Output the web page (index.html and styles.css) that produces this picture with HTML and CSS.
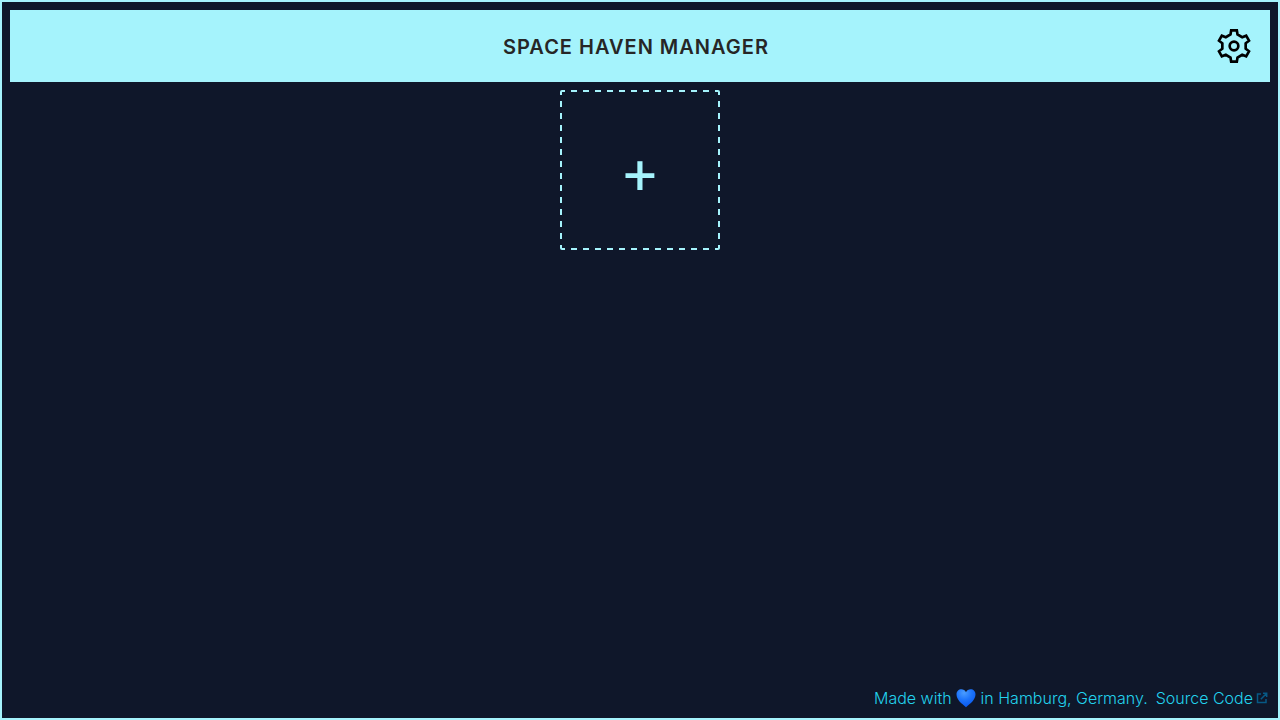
FILE: index.html
```html
<!DOCTYPE html>
<html lang="en">
<head>
<meta charset="utf-8">
<title>Space Haven Manager</title>
<link rel="stylesheet" href="styles.css">
</head>
<body>
<div class="app">
  <header class="header">
    <h1 class="title">Space Haven Manager</h1>
    <button class="settings" type="button" aria-label="Settings">
      <svg class="settings-icon" viewBox="-12 -12 24 24" fill="none" stroke="currentColor" stroke-width="1.6">
        <path d="M-1.7-9.4H1.7L2.1-6.9L4.9-5.3L7.3-6.2L9-3.2L7-1.6V1.6L9 3.2L7.3 6.2L4.9 5.3L2.1 6.9L1.7 9.4H-1.7L-2.1 6.9L-4.9 5.3L-7.3 6.2L-9 3.2L-7 1.6V-1.6L-9-3.2L-7.3-6.2L-4.9-5.3L-2.1-6.9Z"/>
        <circle r="2.6"/>
      </svg>
    </button>
  </header>
  <main class="content">
    <button class="add" type="button" aria-label="Add game">+</button>
  </main>
  <footer class="footer">
    <span class="credit">Made with
      <svg class="heart" viewBox="0 0 20 20" role="img" aria-label="love">
        <defs><radialGradient id="blue" cx=".4" cy=".2" r=".8"><stop offset="0" stop-color="#4a9dff"/><stop offset=".5" stop-color="#1d74fb"/><stop offset="1" stop-color="#0757ee"/></radialGradient></defs>
        <path fill="url(#blue)" d="M10 4.200C9 2.200 7.300 1.300 5.400 1.300C2.600 1.300 .5 3.400 .5 6.300C.5 11.800 5.500 15.500 10 19.200C14.500 15.500 19.500 11.800 19.500 6.300C19.500 3.400 17.400 1.300 14.600 1.300C12.700 1.300 11 2.200 10 4.200Z"/>
      </svg>
      in Hamburg, Germany.</span>
    <a class="source" href="#source">Source Code<svg class="external" viewBox="0 0 12 12" fill="none" stroke="currentColor" stroke-width="1.5"><path d="M5 2H1.500V10.500H10V7M7 1.300H10.700V5M10.500 1.500L4.800 7.200"/></svg></a>
  </footer>
</div>
</body>
</html>
```
FILE: styles.css
```css
* {
  box-sizing: border-box;
}

body {
  margin: 0;
  font-family: Inter, "Liberation Sans", sans-serif;
  background: #0f172a;
}

button {
  padding: 0;
  border: 0;
  background: none;
  font: inherit;
  cursor: pointer;
}

.app {
  display: flex;
  flex-direction: column;
  gap: 8px;
  min-height: 100vh;
  padding: 8px;
  border: 2px solid #a5f3fc;
}

.header {
  display: grid;
  grid-template-columns: 32px 1fr 40px;
  align-items: center;
  padding: 16px;
  background: #a5f3fc;
}

.title {
  grid-column: 2;
  margin: 0;
  padding-top: 2px;
  color: #262626;
  font-size: 20px;
  font-weight: 600;
  line-height: 28px;
  letter-spacing: 1px;
  text-align: center;
  text-transform: uppercase;
}

.settings {
  height: 40px;
  color: #000;
}

.settings-icon {
  display: block;
  width: 40px;
  height: 40px;
}

.content {
  flex: 1;
  display: flex;
  justify-content: center;
  align-items: flex-start;
}

/* Dashed frame with 6px dashes and 6px gaps, meeting evenly at the corners */
.add {
  --across: repeating-linear-gradient(90deg, #a5f3fc 0 5px, transparent 5px 11px, #a5f3fc 11px 12px);
  --down: repeating-linear-gradient(180deg, #a5f3fc 0 5px, transparent 5px 11px, #a5f3fc 11px 12px);
  width: 160px;
  height: 160px;
  padding-top: 2px;
  border-radius: 2px;
  background:
    var(--across) top / 100% 2px no-repeat,
    var(--across) bottom / 100% 2px no-repeat,
    var(--down) left / 2px 100% no-repeat,
    var(--down) right / 2px 100% no-repeat;
  color: #a5f3fc;
  font-size: 61px;
  line-height: 60px;
}

.footer {
  display: flex;
  justify-content: flex-end;
  gap: 8px;
  padding-right: 2px;
  color: #22d3ee;
  font-size: 16px;
  font-weight: 300;
  line-height: 24px;
}

.heart {
  width: 20px;
  height: 20px;
  vertical-align: -4px;
}

.source {
  display: flex;
  align-items: center;
  gap: 3px;
  color: inherit;
  text-decoration: none;
}

.external {
  width: 12px;
  height: 12px;
  color: #075985;
}
```
